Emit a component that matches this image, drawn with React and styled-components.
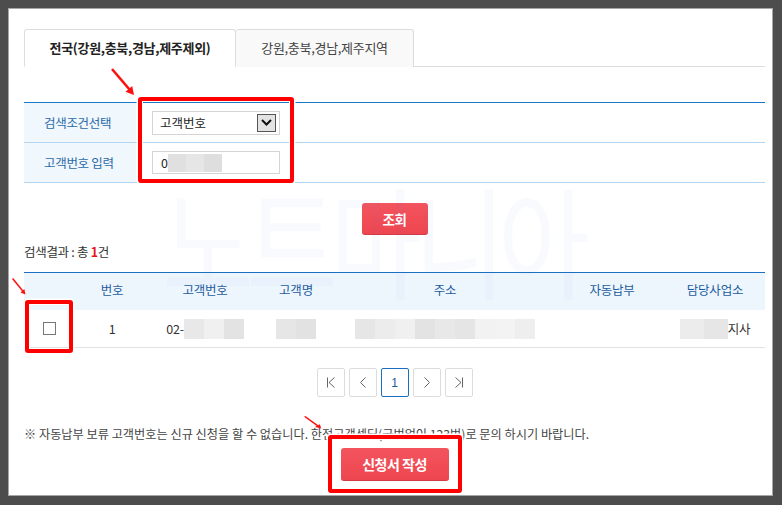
import React from "react";
import styled, { createGlobalStyle } from "styled-components";

const GlobalStyle = createGlobalStyle`
  html, body {
    margin: 0;
    padding: 0;
    background: #4d4d4d;
    font-family: "Noto Sans CJK KR", "Noto Sans", sans-serif;
    font-size: 12px;
    color: #333;
  }
`;

const Panel = styled.div`
  position: relative;
  box-sizing: border-box;
  margin: 8px 0 0 8px;
  width: 765px;
  height: 488px;
  background: #fff;
  border: 1px solid #a6a6a6;
  padding: 20px 7px 0 15px;
`;

const Tabs = styled.div`
  display: flex;
  height: 37px;
  border-bottom: 1px solid #dcdcdc;
`;

const Tab = styled.div`
  box-sizing: border-box;
  width: ${(p) => p.$w}px;
  height: 38px;
  display: flex;
  align-items: center;
  justify-content: center;
  font-size: 13px;
  letter-spacing: -0.3px;
  background: ${(p) => (p.$active ? "#fff" : "#f9f9f9")};
  border: 1px solid #dcdcdc;
  border-bottom: ${(p) => (p.$active ? "1px solid #fff" : "none")};
  border-left: ${(p) => (p.$active ? "1px solid #dcdcdc" : "none")};
  border-radius: 3px 3px 0 0;
  font-weight: ${(p) => (p.$active ? 700 : 400)};
  color: ${(p) => (p.$active ? "#222" : "#444")};
  padding-bottom: 2px;
`;

const SearchTable = styled.div`
  position: relative;
  margin-top: 35px;
  border-top: 1px solid #1a78c8;
`;

const SearchRow = styled.div`
  display: grid;
  grid-template-columns: 112px 1fr;
  height: 39px;
  border-bottom: 1px solid #b3d5ef;
`;

const Label = styled.div`
  display: flex;
  align-items: center;
  padding-left: 20px;
  background: #f0f7fd;
  color: #2c6aa7;
  font-size: 12.5px;
  letter-spacing: -0.3px;
`;

const Field = styled.div`
  display: flex;
  align-items: center;
  padding-left: 16px;
`;

const SelectBox = styled.div`
  box-sizing: border-box;
  width: 128px;
  height: 24px;
  border: 1px solid #d4d4d4;
  display: flex;
  align-items: center;
  justify-content: space-between;
  padding: 0 3px 0 7px;
  font-size: 12.5px;
  color: #222;
`;

const DropButton = styled.div`
  box-sizing: border-box;
  width: 19px;
  height: 18px;
  background: #e3e3e3;
  border: 1px solid #555;
  display: flex;
  align-items: center;
  justify-content: center;
`;

const TextBox = styled.div`
  box-sizing: border-box;
  width: 128px;
  height: 23px;
  border: 1px solid #d4d4d4;
  display: flex;
  align-items: center;
  padding-left: 8px;
  font-size: 12.5px;
  color: #222;
`;

const Mosaic = styled.span`
  display: inline-flex;
  vertical-align: middle;
`;

const MosaicCell = styled.span`
  display: block;
  width: ${(p) => p.$w}px;
  height: ${(p) => p.$h}px;
  background: ${(p) => p.$c};
`;

function Blur({ shades, w = 20, h = 20 }) {
  return (
    <Mosaic>
      {shades.map((c, i) => (
        <MosaicCell key={i} $c={c} $w={w} $h={h} />
      ))}
    </Mosaic>
  );
}

const Mark = styled.div`
  position: absolute;
  left: ${(p) => p.$x}px;
  top: ${(p) => p.$y}px;
  width: ${(p) => p.$w}px;
  height: ${(p) => p.$h}px;
  box-sizing: border-box;
  border: 4px solid #ff0000;
  border-radius: 3px;
  box-shadow: 0 0 0 1.5px #fff, inset 0 0 0 1px #fff;
  pointer-events: none;
  z-index: 3;
`;

const ArrowSvg = styled.svg`
  position: absolute;
  left: ${(p) => p.$x}px;
  top: ${(p) => p.$y}px;
  z-index: 3;
  overflow: visible;
`;

function Arrow({ x, y, w, h }) {
  return (
    <ArrowSvg $x={x} $y={y} width={w} height={h} viewBox="0 0 24 28" preserveAspectRatio="none">
      <line x1="1" y1="1" x2="18.5" y2="21.5" stroke="#ff1010" strokeWidth="2.6" />
      <polygon points="23,27 14.5,23.8 21.2,18" fill="#ff1010" />
    </ArrowSvg>
  );
}

const Center = styled.div`
  display: flex;
  justify-content: center;
  margin-top: ${(p) => p.$mt}px;
`;

const RedButton = styled.button`
  position: relative;
  box-sizing: border-box;
  width: ${(p) => p.$w}px;
  height: ${(p) => p.$h}px;
  border: none;
  border-bottom: 1px solid #d23a44;
  border-radius: 3px;
  background: linear-gradient(#f3545e, #ee4650);
  color: #fff;
  font-family: inherit;
  font-weight: 700;
  font-size: ${(p) => p.$fs}px;
  letter-spacing: -0.5px;
  padding: 0;
`;

const ResultText = styled.div`
  margin-top: 9px;
  height: 16px;
  line-height: 16px;
  font-size: 12.5px;
  color: #333;
  letter-spacing: -0.3px;
  b {
    color: #e8141e;
  }
`;

const ListTable = styled.div`
  position: relative;
  margin-top: 12px;
  border-top: 1px solid #1a6fc0;
`;

const Cols = styled.div`
  display: grid;
  grid-template-columns: 50px 76px 110px 72px 226px 108px 98px;
  height: ${(p) => p.$h}px;
  background: ${(p) => (p.$head ? "#eef6fd" : "#fff")};
  border-bottom: ${(p) => (p.$head ? "none" : "1px solid #e2e2e2")};
`;

const Cell = styled.div`
  display: flex;
  align-items: center;
  justify-content: center;
  font-size: 12.5px;
  letter-spacing: -0.2px;
  color: ${(p) => (p.$head ? "#1c5b9f" : "#333")};
  padding-bottom: ${(p) => (p.$head ? 4 : 0)}px;
`;

const CheckBox = styled.span`
  box-sizing: border-box;
  display: block;
  width: 13px;
  height: 13px;
  border: 1px solid #777;
  background: #fff;
`;

const Pager = styled.div`
  display: flex;
  justify-content: center;
  gap: 4px;
  margin-top: 20px;
`;

const PageBtn = styled.div`
  box-sizing: border-box;
  width: 28px;
  height: 29px;
  border: 1px solid ${(p) => (p.$active ? "#1a6fc0" : "#dcdcdc")};
  border-radius: 2px;
  display: flex;
  align-items: center;
  justify-content: center;
  color: #1a5a9e;
  font-size: 12px;
  font-family: "Liberation Sans", Arial, sans-serif;
`;

const Note = styled.div`
  margin-top: 29px;
  height: 16px;
  line-height: 16px;
  font-size: 12.2px;
  letter-spacing: 0;
  color: #444;
`;

const Watermark = styled.div`
  position: absolute;
  left: 153px;
  top: 168px;
  font-size: 100px;
  line-height: 1;
  letter-spacing: -8px;
  color: rgba(90, 110, 230, 0.035);
  pointer-events: none;
  z-index: 2;
  white-space: nowrap;
  transform: scaleY(1.22);
  transform-origin: top left;
`;

function PageIcon({ kind }) {
  const s = { stroke: "#666", strokeWidth: 1, fill: "none" };
  return (
    <svg width="10" height="11" viewBox="0 0 10 11">
      {kind === "first" && (
        <>
          <line x1="1.5" y1="0.5" x2="1.5" y2="10.5" {...s} />
          <polyline points="8.5,0.5 3,5.5 8.5,10.5" {...s} />
        </>
      )}
      {kind === "prev" && <polyline points="7.5,0.5 2.5,5.5 7.5,10.5" {...s} />}
      {kind === "next" && <polyline points="2.5,0.5 7.5,5.5 2.5,10.5" {...s} />}
      {kind === "last" && (
        <>
          <polyline points="1.5,0.5 7,5.5 1.5,10.5" {...s} />
          <line x1="8.5" y1="0.5" x2="8.5" y2="10.5" {...s} />
        </>
      )}
    </svg>
  );
}

export default function App() {
  return (
    <>
      <GlobalStyle />
      <Panel>
        <Tabs>
          <Tab $active $w={212}>전국(강원,충북,경남,제주제외)</Tab>
          <Tab $w={178}>강원,충북,경남,제주지역</Tab>
        </Tabs>

        <SearchTable>
          <SearchRow>
            <Label>검색조건선택</Label>
            <Field>
              <SelectBox>
                고객번호
                <DropButton>
                  <svg width="11" height="7" viewBox="0 0 11 7">
                    <polyline points="1,1 5.5,5.5 10,1" stroke="#111" strokeWidth="2" fill="none" />
                  </svg>
                </DropButton>
              </SelectBox>
            </Field>
          </SearchRow>
          <SearchRow>
            <Label>고객번호 입력</Label>
            <Field>
              <TextBox>
                0<Blur shades={["#e0e0e0", "#e6e6e6", "#dedede"]} w={18} h={18} />
              </TextBox>
            </Field>
          </SearchRow>
          <Mark $x={114} $y={-6} $w={156} $h={86} />
        </SearchTable>

        <Center $mt={20}>
          <RedButton $w={66} $h={32} $fs={13.5}>조회</RedButton>
        </Center>

        <ResultText>
          검색결과 : 총 <b>1</b>건
        </ResultText>

        <ListTable>
          <Cols $head $h={37}>
            <Cell $head />
            <Cell $head>번호</Cell>
            <Cell $head>고객번호</Cell>
            <Cell $head>고객명</Cell>
            <Cell $head>주소</Cell>
            <Cell $head>자동납부</Cell>
            <Cell $head>담당사업소</Cell>
          </Cols>
          <Cols $h={37}>
            <Cell>
              <CheckBox />
            </Cell>
            <Cell>1</Cell>
            <Cell>
              02-<Blur shades={["#e8e8e8", "#f0f0f0", "#e3e3e3"]} />
            </Cell>
            <Cell>
              <Blur shades={["#e6e6e6", "#e2e2e2"]} />
            </Cell>
            <Cell>
              <Blur
                shades={[
                  "#e6e6e6",
                  "#ececec",
                  "#f0f0f0",
                  "#e3e3e3",
                  "#e8e8e8",
                  "#e5e5e5",
                  "#f2f2f2",
                  "#f3f3f3",
                  "#eeeeee",
                ]}
              />
            </Cell>
            <Cell />
            <Cell>
              <Blur shades={["#ececec", "#e6e6e6"]} w={24} />
              지사
            </Cell>
          </Cols>
          <Mark $x={1} $y={27} $w={48} $h={53} />
        </ListTable>

        <Pager>
          <PageBtn>
            <PageIcon kind="first" />
          </PageBtn>
          <PageBtn>
            <PageIcon kind="prev" />
          </PageBtn>
          <PageBtn $active>1</PageBtn>
          <PageBtn>
            <PageIcon kind="next" />
          </PageBtn>
          <PageBtn>
            <PageIcon kind="last" />
          </PageBtn>
        </Pager>

        <Note>※ 자동납부 보류 고객번호는 신규 신청을 할 수 없습니다. 한전고객센터(국번없이 123번)로 문의 하시기 바랍니다.</Note>

        <Center $mt={6}>
          <RedButton $w={108} $h={33} $fs={14}>
            신청서 작성
            <Mark $x={-13} $y={-13} $w={134} $h={58} />
          </RedButton>
        </Center>

        <Watermark>노트마니아</Watermark>
        <Arrow x={102} y={59} w={24} h={28} />
        <Arrow x={3} y={269} w={14} h={17} />
        <Arrow x={295} y={407} w={18} h={13} />
      </Panel>
    </>
  );
}
